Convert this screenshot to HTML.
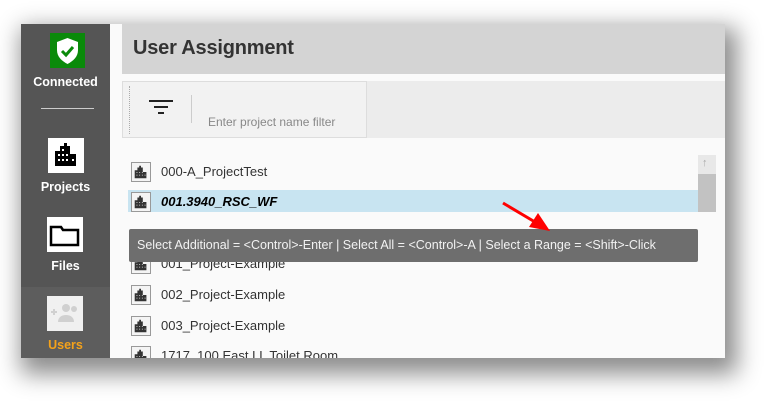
<!DOCTYPE html>
<html><head><meta charset="utf-8"><style>
*{margin:0;padding:0;box-sizing:border-box}
body{width:780px;height:413px;background:#fff;position:relative;overflow:hidden;font-family:"Liberation Sans",sans-serif}
.win{position:absolute;left:21px;top:24px;width:704px;height:334px;background:#fafafa;box-shadow:6px 10px 22px 6px rgba(0,0,0,.45)}
.side{position:absolute;left:21px;top:24px;width:89px;height:334px;background:#555}
.users{position:absolute;left:21px;top:287px;width:89px;height:71px;background:#5d5d5d}
.lbl{position:absolute;left:21px;width:89px;text-align:center;color:#fff;font-weight:bold;font-size:12.5px}
.box{position:absolute;background:#fff}
.hdr{position:absolute;left:122px;top:24px;width:603px;height:50px;background:#d4d4d4;font-size:20px;color:#333;padding:13px 0 0 11px;font-weight:bold;letter-spacing:-.2px}
.fbar{position:absolute;left:122px;top:81px;width:603px;height:57px;background:#ececec}
.fbox{position:absolute;left:122px;top:81px;width:245px;height:57px;background:#f2f2f2;border:1px solid #ddd}
.row{position:absolute;left:128px;height:23px;width:570px;font-size:13px;color:#333}
.row .ic{position:absolute;left:3px;top:2px;width:20px;height:20px;border:1px solid #999;background:#f4f4f4}
.row span{position:absolute;left:33px;top:4px}
.tip{position:absolute;left:129px;top:229px;width:569px;height:33px;background:#6e6e6e;border-radius:2px;color:#f2f2f2;font-size:12.5px;padding:9px 0 0 8px;white-space:nowrap}
</style></head><body>
<svg width="0" height="0" style="position:absolute"><defs><symbol id="b" viewBox="0 0 20 20"><path d="M3 17V8h3V5h2V3h2v2h2v5h4v7z" fill="#333"/><g fill="#ddd"><rect x="5" y="10" width="1" height="1"/><rect x="8" y="10" width="1" height="1"/><rect x="11" y="10" width="1" height="1"/><rect x="5" y="13" width="1" height="1"/><rect x="8" y="13" width="1" height="1"/><rect x="11" y="13" width="1" height="1"/><rect x="14" y="13" width="1" height="1"/></g></symbol></defs></svg>
<div class="win"></div>
<div class="side"></div>
<div class="users"></div>
<div class="box" style="left:50px;top:33px;width:35px;height:35px;background:#0a8a0a">
<svg width="35" height="35" viewBox="0 0 35 35"><path d="M17.5 5 L28 9 V17 C28 24 23 28 17.5 31 C12 28 7 24 7 17 V9 Z" fill="#fff"/><path d="M12 18 L16 22 L23 14" stroke="#0a8a0a" stroke-width="3" fill="none"/></svg></div>
<div class="lbl" style="top:75px">Connected</div>
<div style="position:absolute;left:41px;top:108px;width:53px;height:1px;background:#ccc"></div>
<div class="box" style="left:48px;top:138px;width:36px;height:35px">
<svg width="36" height="35" viewBox="0 0 36 35"><path d="M7 28V13h5V8h4V5h3v3h3v8h6v12z" fill="#000"/><g fill="#fff"><rect x="10" y="16" width="2" height="2"/><rect x="14" y="16" width="2" height="2"/><rect x="18" y="16" width="2" height="2"/><rect x="10" y="21" width="2" height="2"/><rect x="14" y="21" width="2" height="2"/><rect x="18" y="21" width="2" height="2"/><rect x="24" y="21" width="2" height="2"/><rect x="14" y="11" width="2" height="2"/></g></svg></div>
<div class="lbl" style="top:180px">Projects</div>
<div class="box" style="left:47px;top:217px;width:36px;height:35px">
<svg width="36" height="35" viewBox="0 0 36 35"><path d="M4 10h10l2 3h15v15H4z" fill="none" stroke="#000" stroke-width="2.5"/></svg></div>
<div class="lbl" style="top:259px">Files</div>
<div class="box" style="left:47px;top:296px;width:36px;height:35px;background:#f0f0f0">
<svg width="36" height="35" viewBox="0 0 36 35" fill="#d0d0d0"><circle cx="19" cy="12" r="4"/><path d="M11 26c0-5 4-7 8-7s8 2 8 7z"/><circle cx="27" cy="13" r="3"/><path d="M4 16h6M7 13v6" stroke="#d0d0d0" stroke-width="2"/></svg></div>
<div class="lbl" style="top:338px;color:#f5a21a">Users</div>
<div class="hdr">User Assignment</div>
<div class="fbar"></div>
<div class="fbox">
<div style="position:absolute;left:6px;top:4px;height:48px;border-left:1px dotted #aaa"></div>
<svg style="position:absolute;left:26px;top:17px" width="26" height="20"><rect x="0" y="1" width="24" height="2" fill="#222"/><rect x="5" y="7" width="14" height="2" fill="#222"/><rect x="9" y="13" width="6" height="2" fill="#222"/></svg>
<div style="position:absolute;left:68px;top:13px;height:28px;width:1px;background:#ccc"></div>
<div style="position:absolute;left:85px;top:33px;font-size:12px;color:#888">Enter project name filter</div>
</div>
<div style="position:absolute;left:128px;top:190px;width:570px;height:22px;background:#c8e4f1"></div>
<div style="position:absolute;left:698px;top:155px;width:18px;height:57px;background:#e8e8e8"></div>
<div style="position:absolute;left:698px;top:174px;width:18px;height:38px;background:#c2c2c2"></div>
<div style="position:absolute;left:702px;top:157px;font-size:11px;color:#aaa">↑</div>
<div class="row" style="top:160px"><div class="ic"><svg width="18" height="18"><use href="#b"/></svg></div><span>000-A_ProjectTest</span></div>
<div class="row" style="top:190px"><div class="ic"><svg width="18" height="18"><use href="#b"/></svg></div><span style="font-weight:bold;font-style:italic;color:#000">001.3940_RSC_WF</span></div>
<div class="row" style="top:252px"><div class="ic"><svg width="18" height="18"><use href="#b"/></svg></div><span>001_Project-Example</span></div>
<div class="row" style="top:283px"><div class="ic"><svg width="18" height="18"><use href="#b"/></svg></div><span>002_Project-Example</span></div>
<div class="row" style="top:314px"><div class="ic"><svg width="18" height="18"><use href="#b"/></svg></div><span>003_Project-Example</span></div>
<div class="row" style="top:344px;height:14px;overflow:hidden"><div class="ic"><svg width="18" height="18"><use href="#b"/></svg></div><span>1717_100 East LL Toilet Room</span></div>
<div class="tip">Select Additional = &lt;Control&gt;-Enter | Select All = &lt;Control&gt;-A | Select a Range = &lt;Shift&gt;-Click</div>
<svg style="position:absolute;left:0;top:0" width="780" height="413"><line x1="503" y1="203" x2="535" y2="222" stroke="#f00" stroke-width="3"/><path d="M550 231 L529 227 L538 213 Z" fill="#f00"/></svg>
</body></html>
